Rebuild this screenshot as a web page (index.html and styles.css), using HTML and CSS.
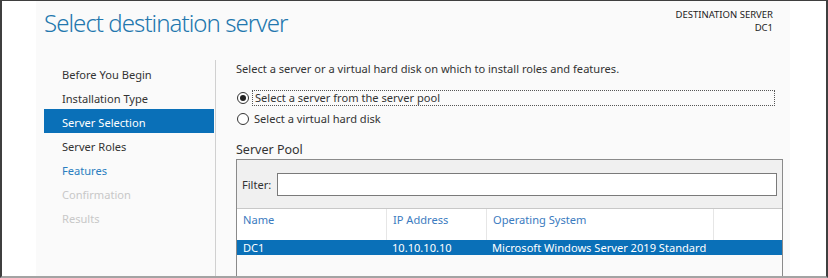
FILE: index.html
```html
<!DOCTYPE html>
<html lang="en">
<head>
<meta charset="UTF-8">
<title>Select destination server</title>
<link rel="stylesheet" href="styles.css">
</head>
<body>
<div class="window">
  <div class="gutter"></div>
  <div class="page">
    <div class="page-header">
      <h1 class="title">Select destination server</h1>
      <div class="dest">
        <div>DESTINATION SERVER</div>
        <div>DC1</div>
      </div>
    </div>
    <div class="page-body">
      <ul class="steps">
        <li>Before You Begin</li>
        <li>Installation Type</li>
        <li class="current">Server Selection</li>
        <li>Server Roles</li>
        <li class="link">Features</li>
        <li class="disabled">Confirmation</li>
        <li class="disabled">Results</li>
      </ul>
      <div class="content">
        <p class="intro">Select a server or a virtual hard disk on which to install roles and features.</p>
        <label class="radio focused"><span class="dot checked"></span><span class="radio-text">Select a server from the server pool</span></label>
        <label class="radio second"><span class="dot"></span><span class="radio-text">Select a virtual hard disk</span></label>
        <h2 class="pool-title">Server Pool</h2>
        <div class="pool">
          <div class="filter">
            <span>Filter:</span>
            <div class="filter-box"></div>
          </div>
          <div class="grid-row grid-head">
            <div>Name</div>
            <div>IP Address</div>
            <div>Operating System</div>
            <div></div>
          </div>
          <div class="grid-row grid-item selected">
            <div>DC1</div>
            <div>10.10.10.10</div>
            <div>Microsoft Windows Server 2019 Standard</div>
            <div></div>
          </div>
        </div>
      </div>
    </div>
  </div>
  <div class="gutter gutter-right"></div>
</div>
</body>
</html>
```

FILE: styles.css
```css
* {
    box-sizing: border-box;
}

body {
    margin: 0;
    font-family: "Noto Sans", sans-serif;
    font-size: 11.1px;
    color: #333;
    background: #fff;
}

.window {
    display: flex;
    width: 828px;
    height: 278px;
    border-top: 1px solid #3f3f3f;
    border-left: 2px solid #3f3f3f;
    border-right: 2px solid #3f3f3f;
    border-bottom: 2px solid #a3a3a3;
    overflow: hidden;
}

.gutter {
    width: 34px;
    background: #fff;
}

.gutter-right {
    width: 36px;
}

.page {
    flex: 1;
    background: #fafafa;
}

.page-header {
    display: flex;
    justify-content: space-between;
    height: 59px;
    padding: 0 17px 0 8px;
}

.title {
    margin: 0;
    padding-top: 5px;
    font-size: 24px;
    font-weight: 300;
    letter-spacing: -0.95px;
    color: #2277ae;
}

.dest {
    padding-top: 7px;
    font-size: 9.5px;
    line-height: 13px;
    text-align: right;
    color: #222;
}

.page-body {
    display: flex;
    height: 216px;
}

.steps {
    list-style: none;
    width: 180px;
    margin: 0;
    padding: 1px 0 0 8px;
    border-right: 1px solid #d0d0d0;
}

.steps li {
    height: 24px;
    line-height: 27px;
    padding-left: 18px;
    margin-right: 1px;
}

.steps li.current {
    background: #0a70b8;
    color: #fff;
}

.steps li.link {
    color: #2a7ec0;
}

.steps li.disabled {
    color: #c8c8c8;
}

.content {
    flex: 1;
    padding: 2px 7px 0 20px;
}

.intro {
    margin: 0;
    line-height: 14px;
}

.radio {
    display: flex;
    align-items: center;
    height: 20px;
}

.radio.focused {
    margin-top: 12px;
}

.radio.second {
    margin-top: 1px;
}

.dot {
    width: 12px;
    height: 12px;
    margin: 0 3px 0 1px;
    border: 1px solid #333;
    border-radius: 50%;
    background: #fff;
    position: relative;
}

.dot.checked::after {
    content: "";
    position: absolute;
    left: 2px;
    top: 2px;
    width: 6px;
    height: 6px;
    border-radius: 50%;
    background: #222;
}

.radio-text {
    padding: 0 0 0 2px;
    line-height: 14px;
    white-space: nowrap;
}

.focused .radio-text {
    flex: 1;
    margin-right: 8px;
    border: 1px dotted #555;
}

.pool-title {
    margin: 13px 0 0;
    font-size: 12.5px;
    font-weight: normal;
    line-height: 16px;
    color: #333;
}

.pool {
    margin-top: 1px;
    height: 120px;
    border: 1px solid #8a8a8a;
    border-bottom: none;
}

.filter {
    display: flex;
    align-items: center;
    height: 49px;
    padding: 0 5px 0 5px;
    background: #f0f0f0;
    border-bottom: 1px solid #c8c8c8;
}

.filter span {
    width: 35px;
}

.filter-box {
    flex: 1;
    height: 23px;
    border: 1px solid #7a7a7a;
    background: #fff;
}

.grid-row {
    display: grid;
    grid-template-columns: 149px 100px 227px 1fr;
    white-space: nowrap;
}

.grid-row > div {
    padding-left: 6px;
}

.grid-head {
    height: 31px;
    line-height: 22px;
    color: #3b7bc0;
    background: #fff;
}

.grid-head > div + div {
    border-left: 1px solid #e6e6e6;
}

.grid-item {
    height: 15px;
    line-height: 15px;
}

.grid-item.selected {
    background: #0a70b8;
    color: #fff;
}
```
